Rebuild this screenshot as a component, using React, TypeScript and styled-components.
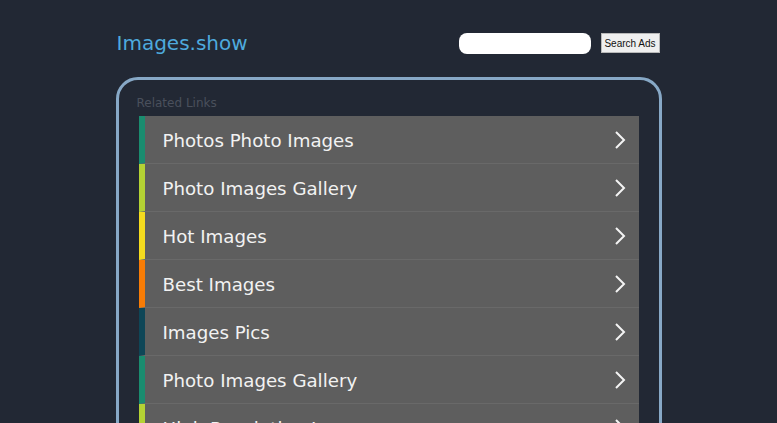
import React from "react";
import styled, { createGlobalStyle } from "styled-components";

const Global = createGlobalStyle`
  html, body { margin: 0; padding: 0; background: #222834; }
  body { font-family: "DejaVu Sans", sans-serif; overflow: hidden; }
`;

const Page = styled.div`
  width: 546px;
  margin: 0 auto;
  padding-top: 22px;
`;

const Header = styled.header`
  display: flex;
  align-items: center;
  justify-content: space-between;
  height: 42px;
  padding: 0 2px 0 1px;
`;

const Logo = styled.div`
  color: #4eaadd;
  font-size: 20px;
  font-family: "DejaVu Sans", sans-serif;
`;

const SearchForm = styled.form`
  display: flex;
  align-items: center;
  gap: 10px;
`;

const SearchInput = styled.input`
  width: 132px;
  height: 21px;
  box-sizing: border-box;
  border: none;
  border-radius: 8px;
  background: #fff;
  padding: 0 8px;
  outline: none;
`;

const SearchButton = styled.button`
  width: 59px;
  height: 20px;
  box-sizing: border-box;
  padding: 0;
  background: #efefef;
  border: 1px solid #b8b8b8;
  border-radius: 0;
  font-family: "Liberation Sans", Arial, sans-serif;
  font-size: 10px;
  color: #111;
`;

const Panel = styled.section`
  margin-top: 13px;
  border: 3px solid #87a8c6;
  border-radius: 22px;
  padding: 14px 20px 20px 20px;
`;

const Title = styled.div`
  color: #4a505c;
  font-size: 12px;
  height: 22px;
  line-height: 18px;
  margin-left: -2px;
`;

const List = styled.div`
  display: flex;
  flex-direction: column;
`;

const Row = styled.a<{ $bar: string }>`
  display: flex;
  align-items: center;
  height: 48px;
  box-sizing: border-box;
  background: #5e5e5e;
  border-left: 6px solid ${(p) => p.$bar};
  border-bottom: 1px solid #696969;
  padding: 0 12px 0 18px;
  color: #f2f2f2;
  font-size: 18.2px;
  text-decoration: none;
`;

const RowText = styled.span`
  flex: 1;
  padding-top: 1px;
`;

const Chevron = () => (
  <svg width="14" height="20" viewBox="0 0 14 20">
    <path d="M3 2 L11 10 L3 18" fill="none" stroke="#f4f4f4" strokeWidth="2" />
  </svg>
);

const rows = [
  { t: "Photos Photo Images", c: "#1a8c6f" },
  { t: "Photo Images Gallery", c: "#b4d234" },
  { t: "Hot Images", c: "#f4db1e" },
  { t: "Best Images", c: "#f77c06" },
  { t: "Images Pics", c: "#0e4657" },
  { t: "Photo Images Gallery", c: "#1a8c6f" },
  { t: "High Resolution Images", c: "#b4d234" },
];

export default function App() {
  return (
    <>
      <Global />
      <Page>
        <Header>
          <Logo>Images.show</Logo>
          <SearchForm onSubmit={(e) => e.preventDefault()}>
            <SearchInput type="text" />
            <SearchButton type="submit">Search Ads</SearchButton>
          </SearchForm>
        </Header>
        <Panel>
          <Title>Related Links</Title>
          <List>
            {rows.map((r, i) => (
              <Row key={i} $bar={r.c} href="#">
                <RowText>{r.t}</RowText>
                <Chevron />
              </Row>
            ))}
          </List>
        </Panel>
      </Page>
    </>
  );
}
